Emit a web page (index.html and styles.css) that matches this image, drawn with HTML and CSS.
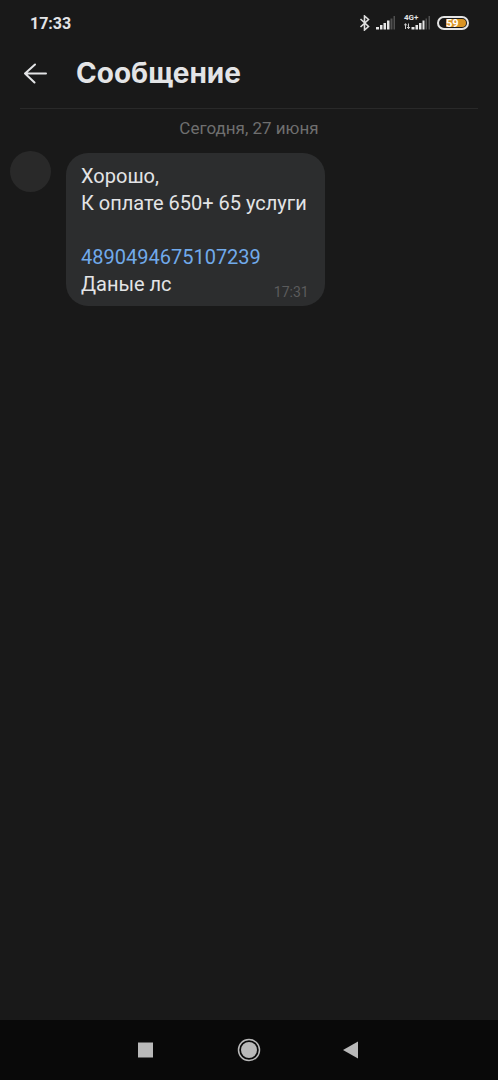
FILE: index.html
```html
<!DOCTYPE html>
<html lang="ru">
<head>
<meta charset="utf-8">
<meta name="viewport" content="width=device-width, initial-scale=1">
<title>Сообщение</title>
<link rel="stylesheet" href="styles.css">
</head>
<body>
<div class="status-bar">
  <time class="clock">17:33</time>
  <div class="status-icons">
    <svg class="bluetooth" width="12" height="16" viewBox="0 0 12 16" aria-label="Bluetooth"><path d="M1.500 4 9.500 11.500 5.500 15V1l4 3.500-8 7.500"/></svg>
    <svg class="signal" width="20" height="14" viewBox="0 0 20 14" aria-hidden="true"><path d="M0 11h3v2.500H0zM4 9h2.500v4.500H4zM7.500 7H10v6.500H7.500zM11 4.500h2.500v9H11z"/><path class="dim" d="M14.500 2.500h2v11h-2zM17.500 0h1.500v13.500h-1.500z"/></svg>
    <div class="mobile">
      <span class="network">4G+</span>
      <svg class="signal" width="26" height="14" viewBox="0 0 26 14" aria-hidden="true"><path class="arrows" d="M1.500 13V7.500M0 9.500l1.500-1.700L3 9.500M4.500 7.500v5.300M3 11l1.500 1.700L6 11"/><path d="M7.500 11h3v2.500h-3zM11.500 9H14v4.500h-2.500zM15 7h2.500v6.500H15zM18.500 4.500h2v9h-2z"/><path class="dim" d="M21.500 2.500h1.500v11h-1.500zM24.500 0H26v13.500h-1.500z"/></svg>
    </div>
    <div class="battery"><span class="charge">59</span></div>
  </div>
</div>
<header class="header">
  <button class="back" type="button" aria-label="Назад"><svg width="24" height="22" viewBox="0 0 24 22"><path d="M22 11.500H1M11 2.500 1 11.500l9.500 9"/></svg></button>
  <h1 class="title">Сообщение</h1>
</header>
<main class="chat">
  <p class="date">Сегодня, 27 июня</p>
  <div class="message">
    <span class="avatar"></span>
    <div class="bubble">
      <p class="text">Хорошо,<br>К оплате 650+ 65 услуги<br><br><a class="number" href="#">4890494675107239</a><br>Даные лс</p>
      <time class="sent">17:31</time>
    </div>
  </div>
</main>
<nav class="system-nav">
  <button class="key" type="button" aria-label="Недавние"><svg width="24" height="24" viewBox="0 0 24 24"><path d="M4 4.500h15v15H4z"/></svg></button>
  <button class="key" type="button" aria-label="Домой"><svg width="24" height="24" viewBox="0 0 24 24"><circle cx="12" cy="12" r="8"/><circle class="ring" cx="12" cy="12" r="10.500"/></svg></button>
  <button class="key" type="button" aria-label="Назад"><svg width="24" height="24" viewBox="0 0 24 24"><path d="M3 12 18 3.500v17z"/></svg></button>
</nav>
</body>
</html>
```
FILE: styles.css
```css
* {
  box-sizing: border-box;
}
body {
  display: flex;
  flex-direction: column;
  min-height: 100vh;
  margin: 0;
  background: #191919;
  color: #e3e4e6;
  font-family: Roboto, "Noto Sans", sans-serif;
}
svg {
  display: block;
}
button {
  display: flex;
  align-items: center;
  justify-content: center;
  padding: 0;
  border: 0;
  background: none;
}
.status-bar {
  display: flex;
  align-items: center;
  justify-content: space-between;
  height: 46px;
  padding: 0 29px 0 30px;
}
.clock {
  font-size: 16px;
  font-weight: 700;
}
.status-icons {
  display: flex;
  align-items: center;
}
.bluetooth {
  margin-right: 5px;
  fill: none;
  stroke: #dedede;
  stroke-width: 1.6;
}
.signal {
  fill: #e6e6e6;
}
.dim {
  fill: #505050;
}
.arrows {
  fill: none;
  stroke: #ccc;
}
.mobile {
  position: relative;
  margin: 0 7px 0 8px;
}
.network {
  position: absolute;
  top: -2px;
  left: 0;
  font-size: 8px;
  font-weight: 700;
  line-height: 8px;
}
.battery {
  width: 32px;
  height: 14px;
  padding: 1px;
  border: 2px solid #e4e4e4;
  border-radius: 7px;
}
.charge {
  display: block;
  height: 8px;
  margin-left: 6px;
  border-radius: 0 4px 4px 0;
  background: #d99323;
  color: #fff;
  font-size: 11px;
  font-weight: 700;
  line-height: 9px;
}
.header {
  display: flex;
  align-items: center;
  gap: 28px;
  height: 63px;
  margin: 0 20px;
  padding: 0 4px 9px;
  border-bottom: 1px solid #292929;
}
.back {
  width: 24px;
  height: 24px;
  fill: none;
  stroke: #e3e4e6;
  stroke-width: 2;
  stroke-linecap: round;
  stroke-linejoin: round;
}
.title {
  margin: 0;
  font-family: Inter, "Noto Sans", sans-serif;
  font-size: 28px;
  font-weight: 700;
  line-height: 32px;
}
.chat {
  flex: 1;
  padding: 8px 10px;
}
.date {
  margin: 0 0 14px;
  color: #6f6f6f;
  font-size: 17px;
  line-height: 22px;
  text-align: center;
}
.message {
  display: flex;
  align-items: flex-start;
  gap: 15px;
}
.avatar {
  flex: none;
  width: 41px;
  height: 41px;
  margin-top: -2px;
  border-radius: 50%;
  background: #292929;
}
.bubble {
  position: relative;
  padding: 10px 18px 8px 15px;
  border-radius: 22px;
  background: #2c2d2e;
}
.text {
  margin: 0;
  font-size: 20px;
  line-height: 27px;
}
.number {
  color: #71aaeb;
  text-decoration: none;
}
.sent {
  position: absolute;
  right: 16px;
  bottom: 6px;
  color: #5b5b5c;
  font-size: 14px;
  line-height: 16px;
}
.system-nav {
  display: flex;
  align-items: center;
  justify-content: center;
  gap: 79px;
  height: 60px;
  background: #090909;
}
.key {
  width: 24px;
  height: 24px;
  fill: #b9b9b9;
}
.ring {
  fill: none;
  stroke: #b9b9b9;
  stroke-width: 1.5;
}
```
